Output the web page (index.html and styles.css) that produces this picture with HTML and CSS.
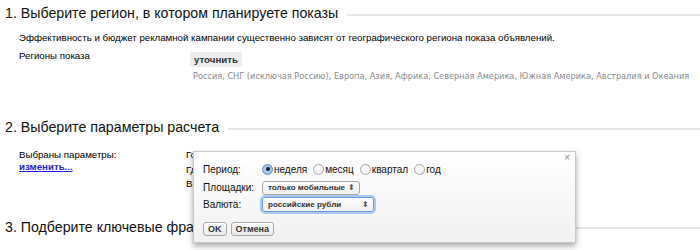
FILE: index.html
```html
<!DOCTYPE html>
<html lang="ru">
<head>
<meta charset="utf-8">
<link rel="stylesheet" href="styles.css">
</head>
<body>
<div class="page">
  <section class="step step-1">
    <h2 class="step-title"><span>1. Выберите регион, в котором планируете показы</span></h2>
    <p class="lead">Эффективность и бюджет рекламной кампании существенно зависят от географического региона показа объявлений.</p>
    <div class="regions">
      <div class="regions-label">Регионы показа</div>
      <div class="regions-value">
        <span class="btn-refine">уточнить</span>
        <div class="regions-list">Россия, СНГ (исключая Россию), Европа, Азия, Африка, Северная Америка, Южная Америка, Австралия и Океания</div>
      </div>
    </div>
  </section>

  <section class="step step-2">
    <h2 class="step-title"><span>2. Выберите параметры расчета</span></h2>
    <div class="params">
      <div class="params-label">Выбраны параметры:<br><a class="change-link" href="#">изменить...</a></div>
      <div class="params-value">
        <div>Горизонт: неделя</div>
        <div>Где показывать: только мобильные</div>
        <div>Валюта: российские рубли</div>
      </div>
    </div>
  </section>

  <section class="step step-3">
    <h2 class="step-title"><span>3. Подберите ключевые фразы</span></h2>
  </section>

  <div class="dialog">
    <span class="dialog-close">×</span>
    <div class="form-row row-period">
      <span class="form-label">Период:</span>
      <span class="radios">
        <span class="radio checked"><span class="radio-dot"></span></span><span class="radio-text">неделя</span>
        <span class="radio"></span><span class="radio-text">месяц</span>
        <span class="radio"></span><span class="radio-text">квартал</span>
        <span class="radio"></span><span class="radio-text">год</span>
      </span>
    </div>
    <div class="form-row row-sites">
      <span class="form-label">Площадки:</span>
      <span class="select select-sites"><span class="select-text">только мобильные</span><span class="select-arrows">⬍</span></span>
    </div>
    <div class="form-row row-currency">
      <span class="form-label">Валюта:</span>
      <span class="select select-currency focused"><span class="select-text">российские рубли</span><span class="select-arrows">⬍</span></span>
    </div>
    <div class="form-buttons">
      <span class="btn">OK</span>
      <span class="btn">Отмена</span>
    </div>
  </div>
</div>
</body>
</html>
```
FILE: styles.css
```css
html, body {
  margin: 0;
  padding: 0;
  background: #fff;
}
body {
  font-family: "Liberation Sans", Arial, sans-serif;
  color: #000;
  width: 700px;
  height: 250px;
  overflow: hidden;
}
.page {
  position: relative;
  padding: 5px 0 0 5px;
}
.step-title {
  display: flex;
  align-items: center;
  gap: 9px;
  margin: 0;
  font-size: 14.2px;
  font-weight: normal;
  line-height: 17px;
  color: #111;
}
.step-title::after {
  content: "";
  flex: 1;
  height: 2px;
  background: #e6e6e6;
  margin-top: 2px;
}
.lead {
  margin: 8px 0 0 14px;
  font-size: 9.7px;
  line-height: 16px;
  white-space: nowrap;
}
.regions {
  display: flex;
  margin: 2px 0 0 14px;
}
.regions-label {
  flex: none;
  width: 171px;
  font-size: 9.7px;
  line-height: 16px;
}
.regions-value {
  display: flex;
  flex-direction: column;
  align-items: flex-start;
  padding-top: 4px;
}
.btn-refine {
  display: inline-block;
  background: #ececec;
  border-radius: 2px;
  padding: 0 4px;
  height: 15px;
  line-height: 15px;
  font-size: 9.7px;
  font-weight: bold;
  color: #333;
}
.regions-list {
  margin: 3px 0 0 3px;
  font-family: "DejaVu Sans", Verdana, sans-serif;
  font-size: 8.2px;
  line-height: 12px;
  color: #8a8a8a;
  white-space: nowrap;
}
.step-2 {
  margin-top: 37px;
}
.params {
  display: flex;
  margin: 13px 0 0 14px;
  font-size: 9.7px;
}
.params-label {
  flex: none;
  width: 167px;
  line-height: 12px;
}
.change-link {
  color: #2a1ed8;
  font-weight: bold;
}
.params-value {
  line-height: 14.5px;
  white-space: nowrap;
  margin-top: -1px;
}
.step-3 {
  margin-top: 27px;
}
.dialog {
  position: absolute;
  left: 193px;
  top: 151px;
  width: 383px;
  height: 92px;
  box-sizing: border-box;
  border: 1px solid #c8c8c8;
  background: linear-gradient(#ffffff, #f1f1f1);
  box-shadow: 0 3px 6px rgba(0, 0, 0, 0.35);
  padding: 9px 9px 0 9px;
  font-size: 10px;
}
.dialog-close {
  position: absolute;
  right: 5px;
  top: 0;
  font-size: 10px;
  color: #888;
}
.form-row {
  display: flex;
  align-items: center;
}
.form-label {
  width: 59px;
  flex: none;
  font-size: 10px;
  color: #111;
}
.row-period {
  height: 16px;
}
.row-sites {
  margin-top: 3px;
  height: 15px;
}
.row-currency {
  margin-top: 2px;
  height: 15px;
}
.radios {
  display: flex;
  align-items: center;
}
.radio {
  display: inline-flex;
  align-items: center;
  justify-content: center;
  box-sizing: border-box;
  width: 11px;
  height: 11px;
  border-radius: 50%;
  border: 1px solid #a8a8a8;
  background: linear-gradient(#fff, #ececec);
  margin: 0 1px 0 6px;
}
.radio:first-child {
  margin-left: 0;
}
.radio.checked {
  border-color: #6a8fc8;
  background: radial-gradient(circle, #bcd6f5 0, #8fb7ea 100%);
}
.radio-dot {
  width: 4px;
  height: 4px;
  border-radius: 50%;
  background: #1b1b1b;
}
.radio-text {
  font-size: 10px;
  color: #111;
}
.select {
  display: inline-flex;
  align-items: center;
  justify-content: space-between;
  box-sizing: border-box;
  height: 14px;
  padding: 0 4px 0 5px;
  border: 1px solid #a9a9a9;
  border-radius: 3px;
  background: linear-gradient(#ffffff, #f0f0f0);
  white-space: nowrap;
}
.select-text {
  font-size: 8.1px;
  font-weight: bold;
  color: #333;
}
.select-sites {
  width: 98px;
}
.select-currency {
  width: 112px;
  height: 15px;
}
.select.focused {
  border-color: #6c9be0;
  box-shadow: 0 0 0 2px #a9c8f2;
}
.select-arrows {
  font-size: 8px;
  line-height: 12px;
  color: #555;
}
.form-buttons {
  display: flex;
  gap: 4px;
  margin-top: 10px;
}
.btn {
  display: inline-block;
  box-sizing: border-box;
  height: 14px;
  line-height: 12px;
  padding: 0 4px;
  border: 1px solid #a9a9a9;
  border-radius: 3px;
  background: linear-gradient(#ffffff, #e8e8e8);
  font-size: 9px;
  font-weight: bold;
  color: #333;
}
```
